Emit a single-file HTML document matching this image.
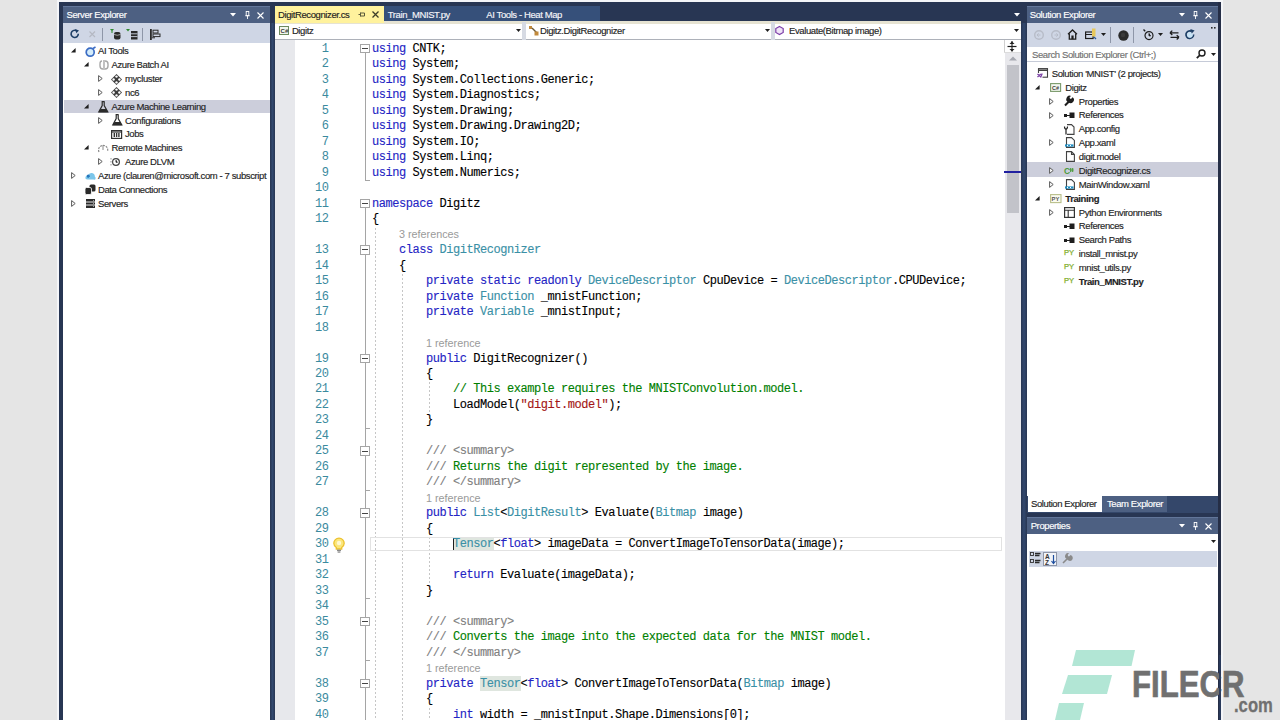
<!DOCTYPE html><html><head><meta charset="utf-8"><style>
html,body{margin:0;padding:0}
body{width:1280px;height:720px;overflow:hidden;position:relative;background:#e5e5e5;font-family:"Liberation Sans",sans-serif}
div,span{box-sizing:border-box}
.code{position:absolute;left:372px;-webkit-text-stroke:0.12px currentColor;font-family:"Liberation Mono",monospace;font-size:12px;letter-spacing:-0.45px;line-height:15.51px;height:15.51px;white-space:pre;color:#000}
.ln{position:absolute;left:300px;width:28.5px;text-align:right;letter-spacing:-0.45px;font-family:"Liberation Mono",monospace;font-size:12px;line-height:15.51px;height:15.51px;color:#3a8a9e}
.k{color:#2424c4}.t{color:#3a90a6}.c{color:#008000}.g{color:#808080}.s{color:#a31515}
.lens{position:absolute;font-family:"Liberation Sans",sans-serif;font-size:10.8px;line-height:15.51px;height:15.51px;color:#9a9a9a;white-space:pre;margin-top:-0.3px}
</style></head><body>
<div style="position:absolute;left:57px;top:0px;width:1166px;height:720px;background:#f4f5f8;"></div>
<div style="position:absolute;left:59px;top:1.5px;width:1162px;height:720px;background:#283653;"></div>
<div style="position:absolute;left:270px;top:23px;width:5px;height:700px;background:linear-gradient(to right,#283652,#33496f 50%,#283652)"></div>
<div style="position:absolute;left:1020.7px;top:23px;width:6.3px;height:700px;background:linear-gradient(to right,#283652,#33496f 50%,#283652)"></div>
<div style="position:absolute;left:63px;top:6px;width:207px;height:17px;background:#4d6082;border-top:1px solid #62769a"></div>
<div style="position:absolute;left:66.5px;top:8.40px;height:14px;line-height:14px;font-family:'Liberation Sans', sans-serif;font-size:9.5px;color:#ffffff;white-space:pre;letter-spacing:-0.4px;-webkit-text-stroke:0.15px #ffffff;">Server Explorer</div>
<div style="position:absolute;left:63px;top:23px;width:207px;height:19.5px;background:#cfd6e5;"></div>
<div style="position:absolute;left:63px;top:42.5px;width:207px;height:680px;background:#ffffff;"></div>
<div style="position:absolute;left:275px;top:5.5px;width:109px;height:16px;background:#fff29d;"></div>
<div style="position:absolute;left:278px;top:7.90px;height:14px;line-height:14px;font-family:'Liberation Sans', sans-serif;font-size:9.5px;color:#1e1e1e;white-space:pre;letter-spacing:-0.4px;-webkit-text-stroke:0.15px #1e1e1e;">DigitRecognizer.cs</div>
<div style="position:absolute;left:384px;top:5.5px;width:216px;height:16px;background:#36507a;"></div>
<div style="position:absolute;left:387.8px;top:7.90px;height:14px;line-height:14px;font-family:'Liberation Sans', sans-serif;font-size:9.5px;color:#f4f4f8;white-space:pre;letter-spacing:-0.4px;-webkit-text-stroke:0.15px #f4f4f8;">Train_MNIST.py</div>
<div style="position:absolute;left:486.3px;top:7.90px;height:14px;line-height:14px;font-family:'Liberation Sans', sans-serif;font-size:9.5px;color:#f4f4f8;white-space:pre;letter-spacing:-0.4px;-webkit-text-stroke:0.15px #f4f4f8;">AI Tools - Heat Map</div>
<div style="position:absolute;left:275px;top:21.2px;width:746px;height:2.8px;background:#e6e3d2;"></div>
<div style="position:absolute;left:275px;top:21px;width:109px;height:1.6px;background:#fff29d;"></div>
<div style="position:absolute;left:275px;top:24px;width:746px;height:15.5px;background:#ffffff;border-bottom:1.5px solid #adb1b9"></div>
<div style="position:absolute;left:522px;top:22px;width:4px;height:17.5px;background:#d6dae3;"></div>
<div style="position:absolute;left:770.5px;top:22px;width:4px;height:17.5px;background:#d6dae3;"></div>
<div style="position:absolute;left:291.9px;top:23.90px;height:14px;line-height:14px;font-family:'Liberation Sans', sans-serif;font-size:9.5px;color:#1e1e1e;white-space:pre;letter-spacing:-0.4px;-webkit-text-stroke:0.15px #1e1e1e;">Digitz</div>
<div style="position:absolute;left:540px;top:23.90px;height:14px;line-height:14px;font-family:'Liberation Sans', sans-serif;font-size:9.5px;color:#1e1e1e;white-space:pre;letter-spacing:-0.4px;-webkit-text-stroke:0.15px #1e1e1e;">Digitz.DigitRecognizer</div>
<div style="position:absolute;left:789px;top:23.90px;height:14px;line-height:14px;font-family:'Liberation Sans', sans-serif;font-size:9.5px;color:#1e1e1e;white-space:pre;letter-spacing:-0.4px;-webkit-text-stroke:0.15px #1e1e1e;">Evaluate(Bitmap image)</div>
<div style="position:absolute;left:275px;top:39.5px;width:20px;height:690px;background:#e7e8ec;"></div>
<div style="position:absolute;left:295px;top:39.5px;width:709.7px;height:690px;background:#ffffff;"></div>
<div style="position:absolute;left:1004.7px;top:39.5px;width:16px;height:690px;background:#e8e8ec;"></div>
<div style="position:absolute;left:1004.7px;top:39.5px;width:16px;height:13px;background:#ffffff;"></div>
<div style="position:absolute;left:1006.5px;top:65px;width:12px;height:148px;background:#c2c3c9;"></div>
<div style="position:absolute;left:375px;top:227.58px;width:1px;height:492.42px;background:repeating-linear-gradient(to bottom,#c6c6c6 0 2px,transparent 2px 4px)"></div>
<div style="position:absolute;left:402px;top:274.05px;width:1px;height:445.95px;background:repeating-linear-gradient(to bottom,#c6c6c6 0 2px,transparent 2px 4px)"></div>
<div style="position:absolute;left:429px;top:382.48px;width:1px;height:30.98px;background:repeating-linear-gradient(to bottom,#c6c6c6 0 2px,transparent 2px 4px)"></div>
<div style="position:absolute;left:429px;top:537.38px;width:1px;height:46.47px;background:repeating-linear-gradient(to bottom,#c6c6c6 0 2px,transparent 2px 4px)"></div>
<div style="position:absolute;left:429px;top:707.77px;width:1px;height:12.23px;background:repeating-linear-gradient(to bottom,#c6c6c6 0 2px,transparent 2px 4px)"></div>
<div style="position:absolute;left:365px;top:49.7px;width:1px;height:131.41000000000003px;background:#a5a5a5;"></div>
<div style="position:absolute;left:365px;top:204.60000000000002px;width:1px;height:720px;background:#a5a5a5;"></div>
<div style="position:absolute;left:365px;top:180.11px;width:5px;height:1px;background:#a5a5a5;"></div>
<div style="position:absolute;left:365px;top:427.95px;width:5px;height:1px;background:#a5a5a5;"></div>
<div style="position:absolute;left:365px;top:489.90999999999997px;width:5px;height:1px;background:#a5a5a5;"></div>
<div style="position:absolute;left:365px;top:598.34px;width:5px;height:1px;background:#a5a5a5;"></div>
<div style="position:absolute;left:365px;top:660.3000000000001px;width:5px;height:1px;background:#a5a5a5;"></div>
<div style="position:absolute;left:360.2px;top:43.70px;width:9.6px;height:9.6px;border:1px solid #a5a5a5;background:#fff"></div>
<div style="position:absolute;left:362.4px;top:48.0px;width:5.2px;height:1.1px;background:#454545;"></div>
<div style="position:absolute;left:360.2px;top:198.60px;width:9.6px;height:9.6px;border:1px solid #a5a5a5;background:#fff"></div>
<div style="position:absolute;left:362.4px;top:202.90000000000003px;width:5.2px;height:1.1px;background:#454545;"></div>
<div style="position:absolute;left:360.2px;top:245.07px;width:9.6px;height:9.6px;border:1px solid #a5a5a5;background:#fff"></div>
<div style="position:absolute;left:362.4px;top:249.37px;width:5.2px;height:1.1px;background:#454545;"></div>
<div style="position:absolute;left:360.2px;top:353.50px;width:9.6px;height:9.6px;border:1px solid #a5a5a5;background:#fff"></div>
<div style="position:absolute;left:362.4px;top:357.8px;width:5.2px;height:1.1px;background:#454545;"></div>
<div style="position:absolute;left:360.2px;top:446.44px;width:9.6px;height:9.6px;border:1px solid #a5a5a5;background:#fff"></div>
<div style="position:absolute;left:362.4px;top:450.74px;width:5.2px;height:1.1px;background:#454545;"></div>
<div style="position:absolute;left:360.2px;top:508.40px;width:9.6px;height:9.6px;border:1px solid #a5a5a5;background:#fff"></div>
<div style="position:absolute;left:362.4px;top:512.6999999999999px;width:5.2px;height:1.1px;background:#454545;"></div>
<div style="position:absolute;left:360.2px;top:616.83px;width:9.6px;height:9.6px;border:1px solid #a5a5a5;background:#fff"></div>
<div style="position:absolute;left:362.4px;top:621.13px;width:5.2px;height:1.1px;background:#454545;"></div>
<div style="position:absolute;left:360.2px;top:678.79px;width:9.6px;height:9.6px;border:1px solid #a5a5a5;background:#fff"></div>
<div style="position:absolute;left:362.4px;top:683.09px;width:5.2px;height:1.1px;background:#454545;"></div>
<div style="position:absolute;left:453.0px;top:536.58px;width:40.5px;height:14.8px;background:#dfe6df;"></div>
<div style="position:absolute;left:480.0px;top:675.9900000000001px;width:40.5px;height:14.8px;background:#dfe6df;"></div>
<div style="position:absolute;left:453px;top:536.98px;width:1px;height:13.6px;background:#1e1e1e;"></div>
<svg style="position:absolute;left:332.5px;top:537.5px;overflow:visible" width="12" height="16" viewBox="0 0 12 16"><path d="M3.3 9.5 Q0.8 7.6 0.8 5.3 A5.2 5.2 0 0 1 11.2 5.3 Q11.2 7.6 8.7 9.5 V11 H3.3 Z" fill="#fbe67a" stroke="#ecc12e" stroke-width="1.3"/><circle cx="6" cy="5" r="2.2" fill="#fff8d0"/><rect x="4" y="11.6" width="4" height="1.5" fill="#8a8a8a"/><rect x="4.6" y="13.4" width="2.8" height="1.3" fill="#8a8a8a"/></svg>
<div style="position:absolute;left:1004.2px;top:39.5px;width:1px;height:13px;background:#d0d0d0;"></div>
<div style="position:absolute;left:1004.2px;top:52px;width:16.5px;height:1px;background:#dcdcdc;"></div>
<svg style="position:absolute;left:1007px;top:40.5px;overflow:visible" width="10" height="11" viewBox="0 0 10 11"><path d="M0.5 5.5 H9.5" stroke="#1e1e1e" stroke-width="1.2"/><path d="M5 0 V10.5" stroke="#1e1e1e" stroke-width="1.1"/><polygon points="2.5,3 7.5,3 5,0.5" fill="#1e1e1e"/><polygon points="2.5,8 7.5,8 5,10.5" fill="#1e1e1e"/></svg>
<svg style="position:absolute;left:1008.5px;top:56px;overflow:visible" width="8" height="5" viewBox="0 0 8 5"><polygon points="0,4.5 8,4.5 4,0.5" fill="#a6a8b0"/></svg>
<div style="position:absolute;left:1004.3px;top:171px;width:17px;height:1.6px;background:#2020a0;"></div>
<div style="position:absolute;left:370.4px;top:537.08px;width:632px;height:14.2px;border:1px solid #e2e2e2"></div>
<div class="ln" style="top:41.70px">1</div>
<div class="code" style="top:41.70px"><span class="k">using</span> CNTK;</div>
<div class="ln" style="top:57.19px">2</div>
<div class="code" style="top:57.19px"><span class="k">using</span> System;</div>
<div class="ln" style="top:72.68px">3</div>
<div class="code" style="top:72.68px"><span class="k">using</span> System.Collections.Generic;</div>
<div class="ln" style="top:88.17px">4</div>
<div class="code" style="top:88.17px"><span class="k">using</span> System.Diagnostics;</div>
<div class="ln" style="top:103.66px">5</div>
<div class="code" style="top:103.66px"><span class="k">using</span> System.Drawing;</div>
<div class="ln" style="top:119.15px">6</div>
<div class="code" style="top:119.15px"><span class="k">using</span> System.Drawing.Drawing2D;</div>
<div class="ln" style="top:134.64px">7</div>
<div class="code" style="top:134.64px"><span class="k">using</span> System.IO;</div>
<div class="ln" style="top:150.13px">8</div>
<div class="code" style="top:150.13px"><span class="k">using</span> System.Linq;</div>
<div class="ln" style="top:165.62px">9</div>
<div class="code" style="top:165.62px"><span class="k">using</span> System.Numerics;</div>
<div class="ln" style="top:181.11px">10</div>
<div class="code" style="top:181.11px"></div>
<div class="ln" style="top:196.60px">11</div>
<div class="code" style="top:196.60px"><span class="k">namespace</span> Digitz</div>
<div class="ln" style="top:212.09px">12</div>
<div class="code" style="top:212.09px">{</div>
<div class="lens" style="left:399.00px;top:227.58px">3 references</div>
<div class="ln" style="top:243.07px">13</div>
<div class="code" style="top:243.07px">    <span class="k">class</span> <span class="t">DigitRecognizer</span></div>
<div class="ln" style="top:258.56px">14</div>
<div class="code" style="top:258.56px">    {</div>
<div class="ln" style="top:274.05px">15</div>
<div class="code" style="top:274.05px">        <span class="k">private</span> <span class="k">static</span> <span class="k">readonly</span> <span class="t">DeviceDescriptor</span> CpuDevice = <span class="t">DeviceDescriptor</span>.CPUDevice;</div>
<div class="ln" style="top:289.54px">16</div>
<div class="code" style="top:289.54px">        <span class="k">private</span> <span class="t">Function</span> _mnistFunction;</div>
<div class="ln" style="top:305.03px">17</div>
<div class="code" style="top:305.03px">        <span class="k">private</span> <span class="t">Variable</span> _mnistInput;</div>
<div class="ln" style="top:320.52px">18</div>
<div class="code" style="top:320.52px"></div>
<div class="lens" style="left:426.00px;top:336.01px">1 reference</div>
<div class="ln" style="top:351.50px">19</div>
<div class="code" style="top:351.50px">        <span class="k">public</span> DigitRecognizer()</div>
<div class="ln" style="top:366.99px">20</div>
<div class="code" style="top:366.99px">        {</div>
<div class="ln" style="top:382.48px">21</div>
<div class="code" style="top:382.48px">            <span class="c">// This example requires the MNISTConvolution.model.</span></div>
<div class="ln" style="top:397.97px">22</div>
<div class="code" style="top:397.97px">            LoadModel(<span class="s">"digit.model"</span>);</div>
<div class="ln" style="top:413.46px">23</div>
<div class="code" style="top:413.46px">        }</div>
<div class="ln" style="top:428.95px">24</div>
<div class="code" style="top:428.95px"></div>
<div class="ln" style="top:444.44px">25</div>
<div class="code" style="top:444.44px">        <span class="g">/// &lt;summary&gt;</span></div>
<div class="ln" style="top:459.93px">26</div>
<div class="code" style="top:459.93px">        <span class="g">///</span><span class="c"> Returns the digit represented by the image.</span></div>
<div class="ln" style="top:475.42px">27</div>
<div class="code" style="top:475.42px">        <span class="g">/// &lt;/summary&gt;</span></div>
<div class="lens" style="left:426.00px;top:490.91px">1 reference</div>
<div class="ln" style="top:506.40px">28</div>
<div class="code" style="top:506.40px">        <span class="k">public</span> <span class="t">List</span>&lt;<span class="t">DigitResult</span>&gt; Evaluate(<span class="t">Bitmap</span> image)</div>
<div class="ln" style="top:521.89px">29</div>
<div class="code" style="top:521.89px">        {</div>
<div class="ln" style="top:537.38px">30</div>
<div class="code" style="top:537.38px">            <span class="t hl">Tensor</span>&lt;<span class="k">float</span>&gt; imageData = ConvertImageToTensorData(image);</div>
<div class="ln" style="top:552.87px">31</div>
<div class="code" style="top:552.87px"></div>
<div class="ln" style="top:568.36px">32</div>
<div class="code" style="top:568.36px">            <span class="k">return</span> Evaluate(imageData);</div>
<div class="ln" style="top:583.85px">33</div>
<div class="code" style="top:583.85px">        }</div>
<div class="ln" style="top:599.34px">34</div>
<div class="code" style="top:599.34px"></div>
<div class="ln" style="top:614.83px">35</div>
<div class="code" style="top:614.83px">        <span class="g">/// &lt;summary&gt;</span></div>
<div class="ln" style="top:630.32px">36</div>
<div class="code" style="top:630.32px">        <span class="g">///</span><span class="c"> Converts the image into the expected data for the MNIST model.</span></div>
<div class="ln" style="top:645.81px">37</div>
<div class="code" style="top:645.81px">        <span class="g">/// &lt;/summary&gt;</span></div>
<div class="lens" style="left:426.00px;top:661.30px">1 reference</div>
<div class="ln" style="top:676.79px">38</div>
<div class="code" style="top:676.79px">        <span class="k">private</span> <span class="t hl">Tensor</span>&lt;<span class="k">float</span>&gt; ConvertImageToTensorData(<span class="t">Bitmap</span> image)</div>
<div class="ln" style="top:692.28px">39</div>
<div class="code" style="top:692.28px">        {</div>
<div class="ln" style="top:707.77px">40</div>
<div class="code" style="top:707.77px">            <span class="k">int</span> width = _mnistInput.Shape.Dimensions[0];</div>
<div style="position:absolute;left:64px;top:100px;width:206px;height:13.2px;background:#cccedb;"></div>
<svg style="position:absolute;left:70.5px;top:48.35px;overflow:visible" width="5" height="5" viewBox="0 0 5 5"><polygon points="4.6,0 4.6,4.6 0,4.6" fill="#1e1e1e"/></svg>
<svg style="position:absolute;left:85px;top:46.6px;overflow:visible" width="11" height="10" viewBox="0 0 11 10"><circle cx="5.2" cy="5.2" r="4" fill="#d4ecfa" stroke="#3b6cc4" stroke-width="1.7"/><path d="M8 1.5 L10.5 0" stroke="#3b6cc4" stroke-width="1.5"/></svg>
<svg style="position:absolute;left:84.0px;top:62.2px;overflow:visible" width="5" height="5" viewBox="0 0 5 5"><polygon points="4.6,0 4.6,4.6 0,4.6" fill="#1e1e1e"/></svg>
<svg style="position:absolute;left:99px;top:60px;overflow:visible" width="10" height="10" viewBox="0 0 10 10"><path d="M3 1 Q1 1 1 4 L1 6 Q1 9 4 9 M6 1 Q9 1 9 4 L9 6 Q9 9 6 9 M5 0 L5 10" fill="none" stroke="#a8a8a8" stroke-width="1.4"/></svg>
<svg style="position:absolute;left:98.0px;top:75.05px;overflow:visible" width="5" height="7" viewBox="0 0 5 7"><polygon points="0.6,0.6 4.2,3.5 0.6,6.4" fill="#fff" stroke="#5a5a5a" stroke-width="1"/></svg>
<svg style="position:absolute;left:111px;top:73.5px;overflow:visible" width="11" height="11" viewBox="0 0 11 11"><polygon points="5.5,0 11,5.5 5.5,11 0,5.5" fill="#3c3c3c"/><circle cx="5.5" cy="2.6" r="1.2" fill="#fff"/><circle cx="5.5" cy="8.4" r="1.2" fill="#fff"/><circle cx="2.6" cy="5.5" r="1.2" fill="#fff"/><circle cx="8.4" cy="5.5" r="1.2" fill="#fff"/></svg>
<svg style="position:absolute;left:98.0px;top:88.9px;overflow:visible" width="5" height="7" viewBox="0 0 5 7"><polygon points="0.6,0.6 4.2,3.5 0.6,6.4" fill="#fff" stroke="#5a5a5a" stroke-width="1"/></svg>
<svg style="position:absolute;left:111px;top:87.4px;overflow:visible" width="11" height="11" viewBox="0 0 11 11"><polygon points="5.5,0 11,5.5 5.5,11 0,5.5" fill="#3c3c3c"/><circle cx="5.5" cy="2.6" r="1.2" fill="#fff"/><circle cx="5.5" cy="8.4" r="1.2" fill="#fff"/><circle cx="2.6" cy="5.5" r="1.2" fill="#fff"/><circle cx="8.4" cy="5.5" r="1.2" fill="#fff"/></svg>
<svg style="position:absolute;left:84.0px;top:103.75px;overflow:visible" width="5" height="5" viewBox="0 0 5 5"><polygon points="4.6,0 4.6,4.6 0,4.6" fill="#1e1e1e"/></svg>
<svg style="position:absolute;left:98px;top:100.5px;overflow:visible" width="11" height="12" viewBox="0 0 11 12"><path d="M3.6 0.6 H6.6 M4.2 0.6 V4.6 L0.8 11 H9.8 L6.2 4.6 V0.6" fill="none" stroke="#2a2a2a" stroke-width="1.2"/><path d="M2.4 8 H8.2 L9.8 11.2 H0.8 Z" fill="#2a2a2a"/></svg>
<svg style="position:absolute;left:98.0px;top:116.6px;overflow:visible" width="5" height="7" viewBox="0 0 5 7"><polygon points="0.6,0.6 4.2,3.5 0.6,6.4" fill="#fff" stroke="#5a5a5a" stroke-width="1"/></svg>
<svg style="position:absolute;left:111.5px;top:114.4px;overflow:visible" width="11" height="12" viewBox="0 0 11 12"><path d="M3.6 0.6 H6.6 M4.2 0.6 V4.6 L0.8 11 H9.8 L6.2 4.6 V0.6" fill="none" stroke="#2a2a2a" stroke-width="1.2"/><path d="M2.4 8 H8.2 L9.8 11.2 H0.8 Z" fill="#2a2a2a"/></svg>
<svg style="position:absolute;left:111px;top:130px;overflow:visible" width="11" height="9" viewBox="0 0 11 9"><rect x="0.6" y="0.6" width="10" height="7.8" fill="#fff" stroke="#333" stroke-width="1.2"/><path d="M3.3 3 V7 M5.6 3 V7 M7.9 3 V7" stroke="#333" stroke-width="1.4"/><path d="M0.6 2 H10.6" stroke="#333" stroke-width="1.2"/></svg>
<svg style="position:absolute;left:84.0px;top:145.3px;overflow:visible" width="5" height="5" viewBox="0 0 5 5"><polygon points="4.6,0 4.6,4.6 0,4.6" fill="#1e1e1e"/></svg>
<svg style="position:absolute;left:98px;top:142.7px;overflow:visible" width="10" height="10" viewBox="0 0 10 10"><path d="M1 9 A4.6 4.6 0 1 1 9.5 8.5" fill="none" stroke="#8a8a8a" stroke-width="1.2" stroke-dasharray="2 1"/><path d="M5 2 V7" stroke="#8a8a8a" stroke-width="1"/></svg>
<svg style="position:absolute;left:98.0px;top:158.15px;overflow:visible" width="5" height="7" viewBox="0 0 5 7"><polygon points="0.6,0.6 4.2,3.5 0.6,6.4" fill="#fff" stroke="#5a5a5a" stroke-width="1"/></svg>
<svg style="position:absolute;left:111px;top:156.5px;overflow:visible" width="10" height="10" viewBox="0 0 10 10"><circle cx="5" cy="5" r="3.4" fill="#fff" stroke="#444" stroke-width="1.2"/><path d="M5 3 V5.3 H6.6" stroke="#444" stroke-width="1"/><path d="M0 1 V9" stroke="#888" stroke-width="0.9" stroke-dasharray="1.5 1.5"/></svg>
<svg style="position:absolute;left:71.0px;top:172.0px;overflow:visible" width="5" height="7" viewBox="0 0 5 7"><polygon points="0.6,0.6 4.2,3.5 0.6,6.4" fill="#fff" stroke="#5a5a5a" stroke-width="1"/></svg>
<svg style="position:absolute;left:84.7px;top:171.5px;overflow:visible" width="11" height="8.5" viewBox="0 0 11 8.5"><path d="M2.5 7.5 Q0 7.5 0.5 5 Q1 3 3 3.5 Q4 0.5 7 1 Q10 1.5 9.8 4.5 Q11 5 10.5 7 Q10 8 8.5 7.5 Z" fill="#7cc6ea"/><path d="M2 4.2 L5 4.2 M2 4.2 L3.6 2.8 M2 4.2 L3.6 5.6" stroke="#1e6fb8" stroke-width="1.2" fill="none"/></svg>
<svg style="position:absolute;left:84.7px;top:184.3px;overflow:visible" width="11" height="11" viewBox="0 0 11 11"><rect x="4.5" y="0.5" width="6" height="7" rx="1.5" fill="#2a2a2a"/><rect x="0" y="3.5" width="6.5" height="7" rx="1.5" fill="#2a2a2a" stroke="#fff" stroke-width="0.8"/></svg>
<svg style="position:absolute;left:71.0px;top:199.7px;overflow:visible" width="5" height="7" viewBox="0 0 5 7"><polygon points="0.6,0.6 4.2,3.5 0.6,6.4" fill="#fff" stroke="#5a5a5a" stroke-width="1"/></svg>
<svg style="position:absolute;left:85.8px;top:199.4px;overflow:visible" width="9" height="9" viewBox="0 0 9 9"><rect x="0" y="0" width="9" height="9" fill="#2a2a2a"/><path d="M0 3 H9 M0 6 H9" stroke="#fff" stroke-width="0.9"/><path d="M7 1.5 H8 M7 4.5 H8 M7 7.5 H8" stroke="#9a9a9a" stroke-width="1"/></svg>
<div style="position:absolute;left:63px;top:42.5px;width:207px;height:680px;overflow:hidden">
<div style="position:absolute;left:35.0px;top:1.75px;height:14px;line-height:14px;font-family:'Liberation Sans', sans-serif;font-size:9.5px;color:#1e1e1e;white-space:pre;letter-spacing:-0.4px;-webkit-text-stroke:0.15px #1e1e1e;">AI Tools</div>
<div style="position:absolute;left:48.5px;top:15.60px;height:14px;line-height:14px;font-family:'Liberation Sans', sans-serif;font-size:9.5px;color:#1e1e1e;white-space:pre;letter-spacing:-0.4px;-webkit-text-stroke:0.15px #1e1e1e;">Azure Batch AI</div>
<div style="position:absolute;left:62.0px;top:29.45px;height:14px;line-height:14px;font-family:'Liberation Sans', sans-serif;font-size:9.5px;color:#1e1e1e;white-space:pre;letter-spacing:-0.4px;-webkit-text-stroke:0.15px #1e1e1e;">mycluster</div>
<div style="position:absolute;left:62.0px;top:43.30px;height:14px;line-height:14px;font-family:'Liberation Sans', sans-serif;font-size:9.5px;color:#1e1e1e;white-space:pre;letter-spacing:-0.4px;-webkit-text-stroke:0.15px #1e1e1e;">nc6</div>
<div style="position:absolute;left:48.5px;top:57.15px;height:14px;line-height:14px;font-family:'Liberation Sans', sans-serif;font-size:9.5px;color:#1e1e1e;white-space:pre;letter-spacing:-0.4px;-webkit-text-stroke:0.15px #1e1e1e;">Azure Machine Learning</div>
<div style="position:absolute;left:62.0px;top:71.00px;height:14px;line-height:14px;font-family:'Liberation Sans', sans-serif;font-size:9.5px;color:#1e1e1e;white-space:pre;letter-spacing:-0.4px;-webkit-text-stroke:0.15px #1e1e1e;">Configurations</div>
<div style="position:absolute;left:62.0px;top:84.85px;height:14px;line-height:14px;font-family:'Liberation Sans', sans-serif;font-size:9.5px;color:#1e1e1e;white-space:pre;letter-spacing:-0.4px;-webkit-text-stroke:0.15px #1e1e1e;">Jobs</div>
<div style="position:absolute;left:48.5px;top:98.70px;height:14px;line-height:14px;font-family:'Liberation Sans', sans-serif;font-size:9.5px;color:#1e1e1e;white-space:pre;letter-spacing:-0.4px;-webkit-text-stroke:0.15px #1e1e1e;">Remote Machines</div>
<div style="position:absolute;left:62.0px;top:112.55px;height:14px;line-height:14px;font-family:'Liberation Sans', sans-serif;font-size:9.5px;color:#1e1e1e;white-space:pre;letter-spacing:-0.4px;-webkit-text-stroke:0.15px #1e1e1e;">Azure DLVM</div>
<div style="position:absolute;left:35.0px;top:126.40px;height:14px;line-height:14px;font-family:'Liberation Sans', sans-serif;font-size:9.5px;color:#1e1e1e;white-space:pre;letter-spacing:-0.4px;-webkit-text-stroke:0.15px #1e1e1e;">Azure (clauren@microsoft.com - 7 subscript</div>
<div style="position:absolute;left:35.0px;top:140.25px;height:14px;line-height:14px;font-family:'Liberation Sans', sans-serif;font-size:9.5px;color:#1e1e1e;white-space:pre;letter-spacing:-0.4px;-webkit-text-stroke:0.15px #1e1e1e;">Data Connections</div>
<div style="position:absolute;left:35.0px;top:154.10px;height:14px;line-height:14px;font-family:'Liberation Sans', sans-serif;font-size:9.5px;color:#1e1e1e;white-space:pre;letter-spacing:-0.4px;-webkit-text-stroke:0.15px #1e1e1e;">Servers</div>
</div>
<div style="position:absolute;left:1027px;top:6px;width:191.5px;height:17px;background:#4d6082;border-top:1px solid #62769a"></div>
<div style="position:absolute;left:1029.8px;top:8.40px;height:14px;line-height:14px;font-family:'Liberation Sans', sans-serif;font-size:9.5px;color:#ffffff;white-space:pre;letter-spacing:-0.4px;-webkit-text-stroke:0.15px #ffffff;">Solution Explorer</div>
<div style="position:absolute;left:1027px;top:23px;width:191.5px;height:23.6px;background:#cfd6e5;"></div>
<div style="position:absolute;left:1027px;top:46.6px;width:191.5px;height:15.5px;background:#ffffff;border-bottom:1.5px solid #c6cbd8"></div>
<div style="position:absolute;left:1032px;top:47.60px;height:14px;line-height:14px;font-family:'Liberation Sans', sans-serif;font-size:9.5px;color:#717171;white-space:pre;letter-spacing:-0.4px;-webkit-text-stroke:0.15px #717171;">Search Solution Explorer (Ctrl+;)</div>
<div style="position:absolute;left:1027px;top:62.1px;width:191.5px;height:434px;background:#ffffff;"></div>
<div style="position:absolute;left:1027px;top:162.3px;width:191.5px;height:14.3px;background:#cccedb;"></div>
<svg style="position:absolute;left:1037px;top:67.5px;overflow:visible" width="11" height="10" viewBox="0 0 11 10"><rect x="1.5" y="0.6" width="9" height="8.6" fill="none" stroke="#424242" stroke-width="1.1"/><path d="M1.5 2.2 H10.5" stroke="#424242" stroke-width="1.6"/><rect x="0" y="5" width="5.5" height="5" fill="#fff"/><path d="M0.5 6 L3.8 9 L5.2 5.5 M0.5 9 L3.8 6" fill="none" stroke="#7b3fa6" stroke-width="1.3"/></svg>
<div style="position:absolute;left:1051.8px;top:66.80px;height:14px;line-height:14px;font-family:'Liberation Sans', sans-serif;font-size:9.5px;color:#1e1e1e;white-space:pre;letter-spacing:-0.4px;-webkit-text-stroke:0.15px #1e1e1e;">Solution 'MNIST' (2 projects)</div>
<svg style="position:absolute;left:1035.3px;top:84.77000000000001px;overflow:visible" width="5" height="5" viewBox="0 0 5 5"><polygon points="4.6,0 4.6,4.6 0,4.6" fill="#1e1e1e"/></svg>
<svg style="position:absolute;left:1050.3px;top:82.5px;overflow:visible" width="11" height="9" viewBox="0 0 11 9"><rect x="0.6" y="0.6" width="10" height="7.8" fill="#f4f8f0" stroke="#7a9a6a" stroke-width="1.1"/><text x="2" y="6.6" font-family="Liberation Sans" font-size="5.5" font-weight="bold" fill="#3a3a3a">C#</text></svg>
<div style="position:absolute;left:1065.3px;top:80.67px;height:14px;line-height:14px;font-family:'Liberation Sans', sans-serif;font-size:9.5px;color:#1e1e1e;white-space:pre;letter-spacing:-0.4px;-webkit-text-stroke:0.15px #1e1e1e;">Digitz</div>
<svg style="position:absolute;left:1049.3px;top:97.64px;overflow:visible" width="5" height="7" viewBox="0 0 5 7"><polygon points="0.6,0.6 4.2,3.5 0.6,6.4" fill="#fff" stroke="#5a5a5a" stroke-width="1"/></svg>
<svg style="position:absolute;left:1064px;top:96.3px;overflow:visible" width="10" height="10" viewBox="0 0 10 10"><path d="M1 9.5 L5.2 5.3" stroke="#1e1e1e" stroke-width="2"/><path d="M4.3 6.2 A3.3 3.3 0 1 0 8.6 1.2 L7 2.9 L5.9 2.4 L5.6 0.9 L7.2 0 A3.3 3.3 0 0 0 4.3 6.2 Z" fill="#1e1e1e"/></svg>
<div style="position:absolute;left:1078.8px;top:94.54px;height:14px;line-height:14px;font-family:'Liberation Sans', sans-serif;font-size:9.5px;color:#1e1e1e;white-space:pre;letter-spacing:-0.4px;-webkit-text-stroke:0.15px #1e1e1e;">Properties</div>
<svg style="position:absolute;left:1049.3px;top:111.51px;overflow:visible" width="5" height="7" viewBox="0 0 5 7"><polygon points="0.6,0.6 4.2,3.5 0.6,6.4" fill="#fff" stroke="#5a5a5a" stroke-width="1"/></svg>
<svg style="position:absolute;left:1064px;top:112px;overflow:visible" width="11" height="6" viewBox="0 0 11 6"><rect x="0" y="2" width="3" height="3" fill="#1e1e1e"/><path d="M3 3.5 H6" stroke="#1e1e1e" stroke-width="1"/><rect x="5.5" y="0.5" width="5" height="5.5" fill="#1e1e1e"/></svg>
<div style="position:absolute;left:1078.8px;top:108.41px;height:14px;line-height:14px;font-family:'Liberation Sans', sans-serif;font-size:9.5px;color:#1e1e1e;white-space:pre;letter-spacing:-0.4px;-webkit-text-stroke:0.15px #1e1e1e;">References</div>
<svg style="position:absolute;left:1064px;top:123.5px;overflow:visible" width="11" height="11" viewBox="0 0 11 11"><path d="M3 0.6 H7.5 L10 3 V10.4 H3" fill="none" stroke="#424242" stroke-width="1.1"/><path d="M0.5 2.5 Q0.5 5 2 5 Q3.5 5 3.5 2.5 M2 5 V10.5" fill="none" stroke="#1e1e1e" stroke-width="1.2"/></svg>
<div style="position:absolute;left:1078.8px;top:122.28px;height:14px;line-height:14px;font-family:'Liberation Sans', sans-serif;font-size:9.5px;color:#1e1e1e;white-space:pre;letter-spacing:-0.4px;-webkit-text-stroke:0.15px #1e1e1e;">App.config</div>
<svg style="position:absolute;left:1049.3px;top:139.25px;overflow:visible" width="5" height="7" viewBox="0 0 5 7"><polygon points="0.6,0.6 4.2,3.5 0.6,6.4" fill="#fff" stroke="#5a5a5a" stroke-width="1"/></svg>
<svg style="position:absolute;left:1064.5px;top:137px;overflow:visible" width="10" height="11" viewBox="0 0 10 11"><path d="M1.5 0.6 H6.5 L9.4 3.4 V10.4 H1.5 Z" fill="#fff" stroke="#424242" stroke-width="1.1"/><path d="M0 8.5 H8.5" stroke="#1f8ec4" stroke-width="2.2"/><path d="M2 8.5 H3 M5 8.5 H6" stroke="#fff" stroke-width="1"/></svg>
<div style="position:absolute;left:1078.8px;top:136.15px;height:14px;line-height:14px;font-family:'Liberation Sans', sans-serif;font-size:9.5px;color:#1e1e1e;white-space:pre;letter-spacing:-0.4px;-webkit-text-stroke:0.15px #1e1e1e;">App.xaml</div>
<svg style="position:absolute;left:1064.5px;top:151px;overflow:visible" width="10" height="11" viewBox="0 0 10 11"><path d="M1.5 0.6 H6.5 L9.4 3.4 V10.4 H1.5 Z M6.5 0.6 V3.4 H9.4" fill="#fff" stroke="#424242" stroke-width="1.1"/></svg>
<div style="position:absolute;left:1078.8px;top:150.02px;height:14px;line-height:14px;font-family:'Liberation Sans', sans-serif;font-size:9.5px;color:#1e1e1e;white-space:pre;letter-spacing:-0.4px;-webkit-text-stroke:0.15px #1e1e1e;">digit.model</div>
<svg style="position:absolute;left:1049.3px;top:166.99px;overflow:visible" width="5" height="7" viewBox="0 0 5 7"><polygon points="0.6,0.6 4.2,3.5 0.6,6.4" fill="#fff" stroke="#5a5a5a" stroke-width="1"/></svg>
<svg style="position:absolute;left:1064px;top:165.5px;overflow:visible" width="10" height="9" viewBox="0 0 10 9"><text x="0" y="8" font-family="Liberation Sans" font-size="8.5" font-weight="bold" fill="#4a9a3a">C</text><path d="M6.6 2 V6 M8.6 2 V6 M5.8 3.2 H9.6 M5.8 4.8 H9.6" stroke="#4a9a3a" stroke-width="0.9"/></svg>
<div style="position:absolute;left:1078.8px;top:163.89px;height:14px;line-height:14px;font-family:'Liberation Sans', sans-serif;font-size:9.5px;color:#1e1e1e;white-space:pre;letter-spacing:-0.4px;-webkit-text-stroke:0.15px #1e1e1e;">DigitRecognizer.cs</div>
<svg style="position:absolute;left:1049.3px;top:180.86px;overflow:visible" width="5" height="7" viewBox="0 0 5 7"><polygon points="0.6,0.6 4.2,3.5 0.6,6.4" fill="#fff" stroke="#5a5a5a" stroke-width="1"/></svg>
<svg style="position:absolute;left:1064.5px;top:178.5px;overflow:visible" width="10" height="11" viewBox="0 0 10 11"><path d="M1.5 0.6 H6.5 L9.4 3.4 V10.4 H1.5 Z" fill="#fff" stroke="#424242" stroke-width="1.1"/><path d="M0 8.5 H8.5" stroke="#1f8ec4" stroke-width="2.2"/><path d="M2 8.5 H3 M5 8.5 H6" stroke="#fff" stroke-width="1"/></svg>
<div style="position:absolute;left:1078.8px;top:177.76px;height:14px;line-height:14px;font-family:'Liberation Sans', sans-serif;font-size:9.5px;color:#1e1e1e;white-space:pre;letter-spacing:-0.4px;-webkit-text-stroke:0.15px #1e1e1e;">MainWindow.xaml</div>
<svg style="position:absolute;left:1035.3px;top:195.73000000000002px;overflow:visible" width="5" height="5" viewBox="0 0 5 5"><polygon points="4.6,0 4.6,4.6 0,4.6" fill="#1e1e1e"/></svg>
<svg style="position:absolute;left:1050.3px;top:193.5px;overflow:visible" width="11.5" height="9" viewBox="0 0 11.5 9"><rect x="0.6" y="0.6" width="10.4" height="8" fill="#fbfbf0" stroke="#b9bf8a" stroke-width="1.1"/><text x="1.6" y="7" font-family="Liberation Sans" font-size="5.8" font-weight="bold" fill="#555">PY</text></svg>
<div style="position:absolute;left:1065.3px;top:191.63px;height:14px;line-height:14px;font-family:'Liberation Sans', sans-serif;font-size:9.5px;color:#1e1e1e;white-space:pre;letter-spacing:-0.4px;-webkit-text-stroke:0.15px #1e1e1e;font-weight:bold">Training</div>
<svg style="position:absolute;left:1049.3px;top:208.6px;overflow:visible" width="5" height="7" viewBox="0 0 5 7"><polygon points="0.6,0.6 4.2,3.5 0.6,6.4" fill="#fff" stroke="#5a5a5a" stroke-width="1"/></svg>
<svg style="position:absolute;left:1064px;top:206.5px;overflow:visible" width="11" height="11" viewBox="0 0 11 11"><rect x="0.6" y="0.6" width="9.8" height="9.8" fill="none" stroke="#333" stroke-width="1.2"/><path d="M0.6 3.2 H10.4 M4.2 3.2 V10.4" stroke="#333" stroke-width="1.1"/></svg>
<div style="position:absolute;left:1078.8px;top:205.50px;height:14px;line-height:14px;font-family:'Liberation Sans', sans-serif;font-size:9.5px;color:#1e1e1e;white-space:pre;letter-spacing:-0.4px;-webkit-text-stroke:0.15px #1e1e1e;">Python Environments</div>
<svg style="position:absolute;left:1064px;top:223px;overflow:visible" width="11" height="6" viewBox="0 0 11 6"><rect x="0" y="2" width="3" height="3" fill="#1e1e1e"/><path d="M3 3.5 H6" stroke="#1e1e1e" stroke-width="1"/><rect x="5.5" y="0.5" width="5" height="5.5" fill="#1e1e1e"/></svg>
<div style="position:absolute;left:1078.8px;top:219.37px;height:14px;line-height:14px;font-family:'Liberation Sans', sans-serif;font-size:9.5px;color:#1e1e1e;white-space:pre;letter-spacing:-0.4px;-webkit-text-stroke:0.15px #1e1e1e;">References</div>
<svg style="position:absolute;left:1064px;top:237px;overflow:visible" width="11" height="6" viewBox="0 0 11 6"><rect x="0" y="2" width="3" height="3" fill="#1e1e1e"/><path d="M3 3.5 H6" stroke="#1e1e1e" stroke-width="1"/><rect x="5.5" y="0.5" width="5" height="5.5" fill="#1e1e1e"/></svg>
<div style="position:absolute;left:1078.8px;top:233.24px;height:14px;line-height:14px;font-family:'Liberation Sans', sans-serif;font-size:9.5px;color:#1e1e1e;white-space:pre;letter-spacing:-0.4px;-webkit-text-stroke:0.15px #1e1e1e;">Search Paths</div>
<svg style="position:absolute;left:1064px;top:247px;overflow:visible" width="12" height="9" viewBox="0 0 12 9"><text x="0" y="7.5" font-family="Liberation Sans" font-size="7.6" fill="#7fae2e" stroke="#7fae2e" stroke-width="0.25">PY</text></svg>
<div style="position:absolute;left:1078.8px;top:247.11px;height:14px;line-height:14px;font-family:'Liberation Sans', sans-serif;font-size:9.5px;color:#1e1e1e;white-space:pre;letter-spacing:-0.4px;-webkit-text-stroke:0.15px #1e1e1e;">install_mnist.py</div>
<svg style="position:absolute;left:1064px;top:261px;overflow:visible" width="12" height="9" viewBox="0 0 12 9"><text x="0" y="7.5" font-family="Liberation Sans" font-size="7.6" fill="#7fae2e" stroke="#7fae2e" stroke-width="0.25">PY</text></svg>
<div style="position:absolute;left:1078.8px;top:260.98px;height:14px;line-height:14px;font-family:'Liberation Sans', sans-serif;font-size:9.5px;color:#1e1e1e;white-space:pre;letter-spacing:-0.4px;-webkit-text-stroke:0.15px #1e1e1e;">mnist_utils.py</div>
<svg style="position:absolute;left:1064px;top:275px;overflow:visible" width="12" height="9" viewBox="0 0 12 9"><text x="0" y="7.5" font-family="Liberation Sans" font-size="7.6" fill="#7fae2e" stroke="#7fae2e" stroke-width="0.25">PY</text></svg>
<div style="position:absolute;left:1078.8px;top:274.85px;height:14px;line-height:14px;font-family:'Liberation Sans', sans-serif;font-size:9.5px;color:#1e1e1e;white-space:pre;letter-spacing:-0.4px;-webkit-text-stroke:0.15px #1e1e1e;font-weight:bold">Train_MNIST.py</div>
<div style="position:absolute;left:1027px;top:496px;width:191.5px;height:16.5px;background:#34476a;"></div>
<div style="position:absolute;left:1027.7px;top:496px;width:74px;height:15.7px;background:#ffffff;"></div>
<div style="position:absolute;left:1031px;top:497.40px;height:14px;line-height:14px;font-family:'Liberation Sans', sans-serif;font-size:9.5px;color:#1e1e1e;white-space:pre;letter-spacing:-0.4px;-webkit-text-stroke:0.15px #1e1e1e;">Solution Explorer</div>
<div style="position:absolute;left:1101.7px;top:496px;width:65px;height:15.7px;background:#4d6082;"></div>
<div style="position:absolute;left:1107px;top:497.40px;height:14px;line-height:14px;font-family:'Liberation Sans', sans-serif;font-size:9.5px;color:#ffffff;white-space:pre;letter-spacing:-0.4px;-webkit-text-stroke:0.15px #ffffff;">Team Explorer</div>
<div style="position:absolute;left:1027px;top:517px;width:191.5px;height:17px;background:#4d6082;border-top:1px solid #62769a"></div>
<div style="position:absolute;left:1030.7px;top:519.40px;height:14px;line-height:14px;font-family:'Liberation Sans', sans-serif;font-size:9.5px;color:#ffffff;white-space:pre;letter-spacing:-0.4px;-webkit-text-stroke:0.15px #ffffff;">Properties</div>
<div style="position:absolute;left:1027px;top:534px;width:191.5px;height:190px;background:#ffffff;"></div>
<div style="position:absolute;left:1029px;top:550.7px;width:188px;height:16px;background:#cfd6e5;"></div>
<div style="position:absolute;left:1217.8px;top:1.5px;width:3.4px;height:720px;background:#252e46;"></div>
<svg style="position:absolute;left:230px;top:13.2px;overflow:visible" width="6" height="4" viewBox="0 0 6 4"><polygon points="0,0 6,0 3,3.4" fill="#ffffff"/></svg>
<svg style="position:absolute;left:244.5px;top:11.4px;overflow:visible" width="5" height="8" viewBox="0 0 5 8"><rect x="1.2" y="0.5" width="2.6" height="4.2" fill="none" stroke="#ffffff" stroke-width="0.9"/><path d="M0.3 4.7 H4.7 M2.5 4.7 V8" stroke="#ffffff" stroke-width="0.9"/></svg>
<svg style="position:absolute;left:256.7px;top:11.8px;overflow:visible" width="7" height="7" viewBox="0 0 7 7"><path d="M0.5 0.5 L6.5 6.5 M6.5 0.5 L0.5 6.5" stroke="#ffffff" stroke-width="1.1"/></svg>
<svg style="position:absolute;left:1178.5px;top:13.2px;overflow:visible" width="6" height="4" viewBox="0 0 6 4"><polygon points="0,0 6,0 3,3.4" fill="#ffffff"/></svg>
<svg style="position:absolute;left:1193.0px;top:11.4px;overflow:visible" width="5" height="8" viewBox="0 0 5 8"><rect x="1.2" y="0.5" width="2.6" height="4.2" fill="none" stroke="#ffffff" stroke-width="0.9"/><path d="M0.3 4.7 H4.7 M2.5 4.7 V8" stroke="#ffffff" stroke-width="0.9"/></svg>
<svg style="position:absolute;left:1205.2px;top:11.8px;overflow:visible" width="7" height="7" viewBox="0 0 7 7"><path d="M0.5 0.5 L6.5 6.5 M6.5 0.5 L0.5 6.5" stroke="#ffffff" stroke-width="1.1"/></svg>
<svg style="position:absolute;left:1178.5px;top:524.0px;overflow:visible" width="6" height="4" viewBox="0 0 6 4"><polygon points="0,0 6,0 3,3.4" fill="#ffffff"/></svg>
<svg style="position:absolute;left:1193.0px;top:522.1999999999999px;overflow:visible" width="5" height="8" viewBox="0 0 5 8"><rect x="1.2" y="0.5" width="2.6" height="4.2" fill="none" stroke="#ffffff" stroke-width="0.9"/><path d="M0.3 4.7 H4.7 M2.5 4.7 V8" stroke="#ffffff" stroke-width="0.9"/></svg>
<svg style="position:absolute;left:1205.2px;top:522.5999999999999px;overflow:visible" width="7" height="7" viewBox="0 0 7 7"><path d="M0.5 0.5 L6.5 6.5 M6.5 0.5 L0.5 6.5" stroke="#ffffff" stroke-width="1.1"/></svg>
<svg style="position:absolute;left:357.5px;top:11.5px;overflow:visible" width="7" height="5" viewBox="0 0 7 5"><path d="M0.5 2.5 H2.5 M2.5 0.5 V4.5 M2.5 1 H6.5 V4 H2.5" fill="none" stroke="#5a5a3c" stroke-width="1"/></svg>
<svg style="position:absolute;left:372px;top:10.8px;overflow:visible" width="7" height="7" viewBox="0 0 7 7"><path d="M0.5 0.5 L6.5 6.5 M6.5 0.5 L0.5 6.5" stroke="#3c3c28" stroke-width="1.3"/></svg>
<svg style="position:absolute;left:1014px;top:13.2px;overflow:visible" width="6" height="4" viewBox="0 0 6 4"><polygon points="0,0 6,0 3,3.4" fill="#ffffff"/></svg>
<svg style="position:absolute;left:278.7px;top:25.6px;overflow:visible" width="10" height="9" viewBox="0 0 10 9"><rect x="0.5" y="0.5" width="9" height="8" fill="#f2f7ee" stroke="#6d8a5e" stroke-width="1"/><text x="1.6" y="7" font-family="Liberation Sans" font-size="6" font-weight="bold" fill="#333">C#</text></svg>
<svg style="position:absolute;left:515.7px;top:29.0px;overflow:visible" width="5" height="3" viewBox="0 0 5 3"><polygon points="0,0 5,0 2.5,3" fill="#1e1e1e"/></svg>
<svg style="position:absolute;left:527.6px;top:24.5px;overflow:visible" width="11" height="11" viewBox="0 0 11 11"><path d="M1 1 L4 1 L4 4 L1 4 Z" fill="#c28a3c"/><path d="M4 3 L9 8" stroke="#6a5a3a" stroke-width="1.4"/><rect x="6.5" y="6.5" width="4" height="4" fill="#c28a3c"/></svg>
<svg style="position:absolute;left:764.5px;top:29.0px;overflow:visible" width="5" height="3" viewBox="0 0 5 3"><polygon points="0,0 5,0 2.5,3" fill="#1e1e1e"/></svg>
<svg style="position:absolute;left:775px;top:25.5px;overflow:visible" width="9" height="9" viewBox="0 0 9 9"><polygon points="4.5,0.5 8.2,2.5 8.2,6.5 4.5,8.5 0.8,6.5 0.8,2.5" fill="#efe3f7" stroke="#7d3fa8" stroke-width="1.2"/></svg>
<svg style="position:absolute;left:1013.5px;top:29.0px;overflow:visible" width="5" height="3" viewBox="0 0 5 3"><polygon points="0,0 5,0 2.5,3" fill="#1e1e1e"/></svg>
<svg style="position:absolute;left:70px;top:28.7px;overflow:visible" width="10" height="10" viewBox="0 0 10 10"><path d="M8.3 4.8 A3.6 3.6 0 1 1 6.2 1.6" fill="none" stroke="#1e3f66" stroke-width="1.6"/><polygon points="5,0 9,1.4 6.3,4.2" fill="#1e3f66"/></svg>
<svg style="position:absolute;left:88.7px;top:31px;overflow:visible" width="6.5" height="6.5" viewBox="0 0 6.5 6.5"><path d="M0.5 0.5 L6 6 M6 0.5 L0.5 6" stroke="#b4b8c2" stroke-width="1.1"/></svg>
<div style="position:absolute;left:102.3px;top:27.5px;width:1.1px;height:13px;background:#8e96a8;"></div>
<svg style="position:absolute;left:109.5px;top:28.8px;overflow:visible" width="12" height="10.5" viewBox="0 0 12 10.5"><polygon points="0,0 4,0 2,2.6" fill="#2f8a2f"/><path d="M2 2 V4" stroke="#2f8a2f" stroke-width="1"/><rect x="4" y="3" width="6.5" height="7.5" rx="2" fill="#2a2a2a"/><path d="M4 5.5 Q7.2 7 10.5 5.5" stroke="#ddd" stroke-width="0.7" fill="none"/></svg>
<svg style="position:absolute;left:126px;top:28.5px;overflow:visible" width="12" height="11" viewBox="0 0 12 11"><polygon points="0,0 4,0 2,2.6" fill="#2f8a2f"/><rect x="5" y="2" width="6.5" height="8.5" fill="#2a2a2a"/><path d="M5 4.8 H11.5 M5 7.6 H11.5" stroke="#cfd6e5" stroke-width="0.9"/></svg>
<div style="position:absolute;left:142.3px;top:27.5px;width:1.1px;height:13px;background:#8e96a8;"></div>
<svg style="position:absolute;left:149.5px;top:28.5px;overflow:visible" width="11" height="11" viewBox="0 0 11 11"><rect x="0" y="0" width="1.8" height="11" fill="#2a2a2a"/><rect x="3" y="1.2" width="5" height="2.8" fill="none" stroke="#2a2a2a" stroke-width="1"/><rect x="3" y="5" width="7" height="2.6" fill="none" stroke="#2a2a2a" stroke-width="1"/><path d="M1.8 8.8 H5" stroke="#2a2a2a" stroke-width="1"/></svg>
<svg style="position:absolute;left:1034px;top:30px;overflow:visible" width="10" height="10" viewBox="0 0 10 10"><circle cx="5" cy="5" r="4.3" fill="none" stroke="#b7bcc8" stroke-width="1.4"/><path d="M6.5 5 H3 M4.6 3.3 L3 5 L4.6 6.7" fill="none" stroke="#b7bcc8" stroke-width="1"/></svg>
<svg style="position:absolute;left:1050.5px;top:30px;overflow:visible" width="10" height="10" viewBox="0 0 10 10"><circle cx="5" cy="5" r="4.3" fill="none" stroke="#b7bcc8" stroke-width="1.4"/><path d="M3.5 5 H7 M5.4 3.3 L7 5 L5.4 6.7" fill="none" stroke="#b7bcc8" stroke-width="1"/></svg>
<svg style="position:absolute;left:1067px;top:29px;overflow:visible" width="11" height="11" viewBox="0 0 11 11"><path d="M1 5.3 L5.5 1 L10 5.3" fill="none" stroke="#1e1e1e" stroke-width="1.3"/><path d="M2.3 4.5 V10.2 H8.7 V4.5" fill="none" stroke="#1e1e1e" stroke-width="1.3"/><rect x="4.4" y="6.5" width="2.2" height="3.7" fill="#1e1e1e"/></svg>
<svg style="position:absolute;left:1084.5px;top:28px;overflow:visible" width="13" height="12" viewBox="0 0 13 12"><rect x="0.6" y="4" width="7.5" height="6.5" fill="none" stroke="#1e1e1e" stroke-width="1.2"/><path d="M0.6 6.5 H8" stroke="#1e1e1e" stroke-width="1"/><rect x="7" y="0.5" width="3.5" height="8" fill="#e8c85a"/><path d="M9 9 L11 11" stroke="#2a5aa0" stroke-width="1.2"/></svg>
<svg style="position:absolute;left:1101.0px;top:33.0px;overflow:visible" width="5" height="3" viewBox="0 0 5 3"><polygon points="0,0 5,0 2.5,3" fill="#1e1e1e"/></svg>
<div style="position:absolute;left:1110.2px;top:26.5px;width:1.1px;height:16px;background:#8e96a8;"></div>
<svg style="position:absolute;left:1117.5px;top:29.5px;overflow:visible" width="11" height="11" viewBox="0 0 11 11"><circle cx="5.5" cy="5.5" r="5.2" fill="#2a2a2a"/><circle cx="5" cy="5" r="2.2" fill="#3a3a3a"/></svg>
<div style="position:absolute;left:1133.4px;top:26.5px;width:1.1px;height:16px;background:#8e96a8;"></div>
<svg style="position:absolute;left:1143px;top:29px;overflow:visible" width="11" height="12" viewBox="0 0 11 12"><path d="M0.5 0.5 L2.2 2.2" stroke="#1e1e1e" stroke-width="1.4"/><circle cx="6" cy="6.6" r="4" fill="none" stroke="#1e1e1e" stroke-width="1.2"/><path d="M6 4.3 V6.8 H7.8" stroke="#1e1e1e" stroke-width="1"/></svg>
<svg style="position:absolute;left:1158.0px;top:33.0px;overflow:visible" width="5" height="3" viewBox="0 0 5 3"><polygon points="0,0 5,0 2.5,3" fill="#1e1e1e"/></svg>
<svg style="position:absolute;left:1168.5px;top:29.5px;overflow:visible" width="11" height="10" viewBox="0 0 11 10"><path d="M1 2.8 H9.5 M1 2.8 L3.3 0.6 M1 2.8 L3.3 5" fill="none" stroke="#1e1e1e" stroke-width="1.3"/><path d="M10 7.3 H1.5 M10 7.3 L7.7 5.1 M10 7.3 L7.7 9.5" fill="none" stroke="#1e1e1e" stroke-width="1.3"/></svg>
<svg style="position:absolute;left:1185px;top:29px;overflow:visible" width="10.5" height="11" viewBox="0 0 10.5 11"><path d="M8.6 5.6 A3.8 3.8 0 1 1 6.3 2.1" fill="none" stroke="#1e3f66" stroke-width="1.7"/><circle cx="5" cy="6" r="2.7" fill="#c8e4f6"/><polygon points="5.3,0 9.6,1.5 6.7,4.5" fill="#1e3f66"/></svg>
<svg style="position:absolute;left:1211px;top:26.5px;overflow:visible" width="5" height="2" viewBox="0 0 5 2"><rect x="0" y="0" width="1.6" height="1.6" fill="#2a2a2a"/><rect x="3" y="0" width="1.6" height="1.6" fill="#2a2a2a"/></svg>
<svg style="position:absolute;left:1196px;top:48.5px;overflow:visible" width="10" height="10" viewBox="0 0 10 10"><circle cx="6" cy="4" r="3" fill="none" stroke="#1e1e1e" stroke-width="1.4"/><path d="M3.9 6.1 L0.8 9.2" stroke="#1e1e1e" stroke-width="1.7"/></svg>
<svg style="position:absolute;left:1211.0px;top:52.5px;overflow:visible" width="5" height="3" viewBox="0 0 5 3"><polygon points="0,0 5,0 2.5,3" fill="#1e1e1e"/></svg>
<svg style="position:absolute;left:1210.8px;top:540.2px;overflow:visible" width="5" height="3" viewBox="0 0 5 3"><polygon points="0,0 5,0 2.5,3" fill="#1e1e1e"/></svg>
<svg style="position:absolute;left:1030px;top:551.8px;overflow:visible" width="12" height="13" viewBox="0 0 12 13"><rect x="0.5" y="0.5" width="3" height="3" fill="none" stroke="#333" stroke-width="0.9"/><rect x="0.5" y="7.5" width="3" height="3" fill="none" stroke="#333" stroke-width="0.9"/><path d="M5 1.5 H10.5 M5 3.5 H9.5 M5 8.5 H10.5 M5 10.5 H9.5" stroke="#2a2a2a" stroke-width="1.3"/></svg>
<div style="position:absolute;left:1042.8px;top:551.5px;width:14.5px;height:14.5px;background:#f2f4f8;border:1px solid #8e96a8"></div>
<svg style="position:absolute;left:1044.5px;top:553px;overflow:visible" width="12" height="12" viewBox="0 0 12 12"><text x="0" y="5.5" font-family="Liberation Sans" font-weight="bold" font-size="6.5" fill="#333">A</text><text x="0" y="11.5" font-family="Liberation Sans" font-weight="bold" font-size="6.5" fill="#333">Z</text><path d="M8.5 2 V10 M6.5 8 L8.5 10.5 L10.5 8" fill="none" stroke="#1f4fa0" stroke-width="1.2"/></svg>
<svg style="position:absolute;left:1061.5px;top:553px;overflow:visible" width="10" height="11" viewBox="0 0 10 11"><path d="M1 10 L5.5 5.5" stroke="#8a8a8a" stroke-width="1.6"/><path d="M5 6 A3 3 0 1 0 8.5 2 L7 3.5 L6 3 L5.8 1.6 L7.2 0.4 A3 3 0 0 0 5 6" fill="#8a8a8a"/></svg>
<div style="position:absolute;left:1132px;top:666.7px;-webkit-text-stroke:0.7px #707070;font-family:'Liberation Sans',sans-serif;font-weight:bold;font-size:36.8px;line-height:36.8px;color:#707070;white-space:pre;transform:scaleX(0.847);transform-origin:0 0">FILECR</div>
<div style="position:absolute;left:1234px;top:694.6px;-webkit-text-stroke:0.3px #707070;font-family:'Liberation Sans',sans-serif;font-weight:bold;font-size:20.8px;line-height:20.8px;color:#707070;white-space:pre;transform:scaleX(0.8);transform-origin:0 0">.com</div>
<svg style="position:absolute;left:0;top:0" width="1280" height="720"><g fill="#b2e6d5"><polygon points="1076,650 1135,650 1131.5,666 1072,666"/><polygon points="1068,675 1112,675 1107,694 1062,694"/><polygon points="1059,703 1084,703 1080,720 1055,720"/></g></svg>
<div style="position:absolute;left:1218.5px;top:655px;width:2.5px;height:65px;background:#2a3b5c;opacity:0.9"></div>
</body></html>
